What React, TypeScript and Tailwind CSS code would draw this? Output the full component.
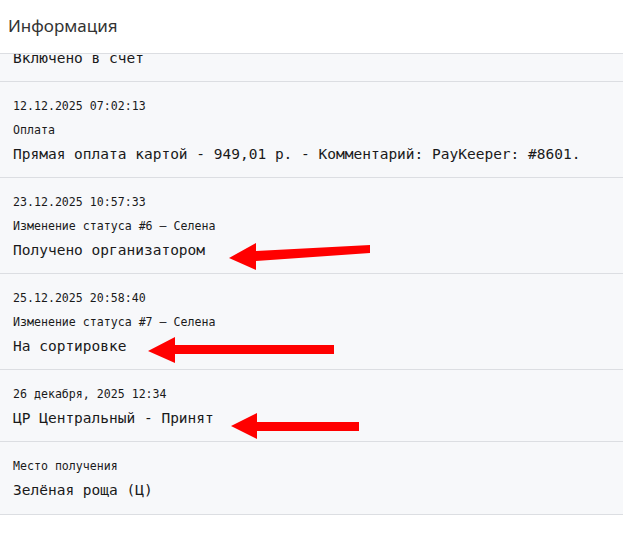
import React from 'react';

interface HistoryItem {
  date?: string;
  label?: string;
  text: string;
}

const items: HistoryItem[] = [
  { date: '12.12.2025 07:02:13', label: 'Оплата', text: 'Прямая оплата картой - 949,01 р. - Комментарий: PayKeeper: #8601.' },
  { date: '23.12.2025 10:57:33', label: 'Изменение статуса #6 — Селена', text: 'Получено организатором' },
  { date: '25.12.2025 20:58:40', label: 'Изменение статуса #7 — Селена', text: 'На сортировке' },
  { date: '26 декабря, 2025 12:34', text: 'ЦР Центральный - Принят' },
  { label: 'Место получения', text: 'Зелёная роща (Ц)' },
];

const Row: React.FC<{ item: HistoryItem; last?: boolean }> = ({ item, last }) => (
  <div className={`border-b border-[#dcdee2] px-[13px] pt-3 ${last ? 'pb-3' : 'pb-[11px]'}`}>
    {item.date && <div className="h-6 text-[11.6px] leading-6">{item.date}</div>}
    {item.label && <div className="h-6 text-[11.6px] leading-6">{item.label}</div>}
    <div className="h-6 text-[14.5px] leading-6">{item.text}</div>
  </div>
);

export default function App() {
  return (
    <div className="relative w-[623px] h-[553px] bg-white overflow-hidden">
      <div className="h-[54px] border-b border-[#dcdee2] flex items-center px-2 pb-px text-[17px] text-[#333] font-['Noto_Sans',sans-serif]">
        Информация
      </div>
      <div className="bg-[#f7f8fa] text-[#1a1a1a] font-['DejaVu_Sans_Mono',monospace] overflow-hidden">
        {/* list is scrolled: the first entry is only partly visible */}
        <div className="border-b border-[#dcdee2] px-[13px] pb-[11px]">
          <div className="-mt-2 h-6 text-[14.5px] leading-6">Включено в счет</div>
        </div>
        {items.map((item, i) => (
          <Row key={i} item={item} last={i === items.length - 1} />
        ))}
      </div>

      {/* red arrows drawn on top */}
      <svg className="absolute inset-0 pointer-events-none" width="623" height="553" viewBox="0 0 623 553">
        <polygon fill="#ff0000" points="229,258 256,243 256,251 370,245 370,253 256,261 256,270" />
        <polygon fill="#ff0000" points="148,351 175,337 175,345 334,345 334,354 175,354 175,363" />
        <polygon fill="#ff0000" points="231,426 257,413 257,422 359,422 359,431 257,431 257,439" />
      </svg>
    </div>
  );
}
